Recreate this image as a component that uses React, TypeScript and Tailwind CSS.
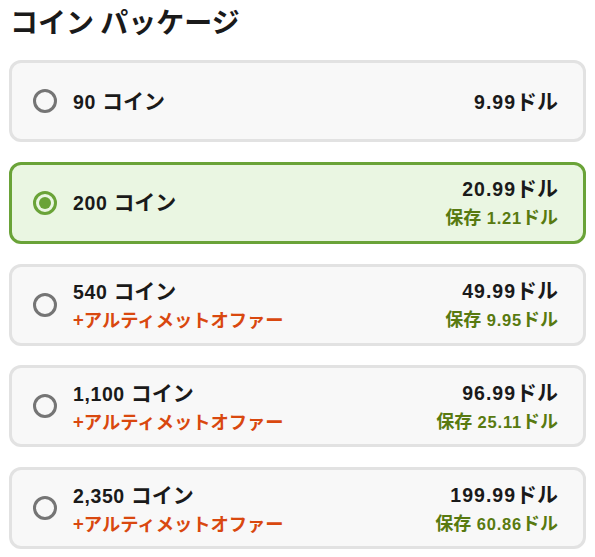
const packages = [
  { coins: "90", price: "9.99", save: null, ultimate: false, selected: false },
  { coins: "200", price: "20.99", save: "1.21", ultimate: false, selected: true },
  { coins: "540", price: "49.99", save: "9.95", ultimate: true, selected: false },
  { coins: "1,100", price: "96.99", save: "25.11", ultimate: true, selected: false },
  { coins: "2,350", price: "199.99", save: "60.86", ultimate: true, selected: false },
];

const jp = { fontFamily: '"Noto Sans CJK JP", sans-serif', letterSpacing: 0 };

function Radio({ checked }: { checked: boolean }) {
  return checked ? (
    <span className="flex h-6 w-6 shrink-0 items-center justify-center rounded-full border-[3px] border-[#6aa338]">
      <span className="h-3 w-3 rounded-full bg-[#6aa338]" />
    </span>
  ) : (
    <span className="h-6 w-6 shrink-0 rounded-full border-[3px] border-[#757575]" />
  );
}

export default function App() {
  return (
    <div
      className="min-h-screen bg-white px-[9px] pt-[3px] text-[#1a1a1a]"
      style={{ fontFamily: '"Liberation Sans", "Noto Sans CJK JP", sans-serif' }}
    >
      <h1 className="pl-px text-[28px] font-bold leading-[36px]" style={jp}>
        コイン パッケージ
      </h1>
      <div className="mt-[21px] flex flex-col gap-[19.75px]">
        {packages.map((p) => (
          <div
            key={p.coins}
            className={
              p.selected
                ? "flex h-[82px] items-center rounded-[12px] border-[3px] border-[#6aa338] bg-[#eaf6e2] pl-[21px] pr-[25px]"
                : "flex h-[82px] items-center rounded-[12px] border-[3px] border-[#e2e2e2] bg-[#f8f8f8] pl-[21px] pr-[25px]"
            }
          >
            <Radio checked={p.selected} />
            <div className="ml-4 flex flex-1 flex-col">
              <span className="text-[19.5px] font-bold leading-[27px] tracking-[0.6px]">
                {p.coins}{" "}
                <span className="text-[21px]" style={jp}>
                  コイン
                </span>
              </span>
              {p.ultimate && (
                <span className="text-[18.3px] font-bold leading-[26px] text-[#d9480f]" style={jp}>
                  +アルティメットオファー
                </span>
              )}
            </div>
            <div className="flex flex-col items-end">
              <span className="text-[19.5px] font-bold leading-[27px] tracking-[1px]">
                {p.price}
                <span className="text-[21px]" style={jp}>
                  ドル
                </span>
              </span>
              {p.save && (
                <span className="text-[16.5px] font-bold leading-[26px] tracking-[0.8px] text-[#587a10]">
                  <span className="text-[18px]" style={jp}>
                    保存
                  </span>{" "}
                  {p.save}
                  <span className="text-[18px]" style={jp}>
                    ドル
                  </span>
                </span>
              )}
            </div>
          </div>
        ))}
      </div>
    </div>
  );
}
